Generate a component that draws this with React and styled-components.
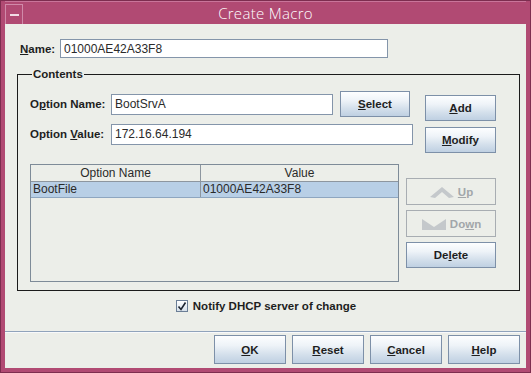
import React, { useState } from 'react'
import styled, { createGlobalStyle, css } from 'styled-components'

const GlobalStyle = createGlobalStyle`
  html, body {
    margin: 0;
    padding: 0;
    background: #ffffff;
  }
  body {
    font-family: "Liberation Sans", Arial, sans-serif;
  }
  * {
    box-sizing: border-box;
  }
`;

const Frame = styled.div`
  width: 531px;
  height: 373px;
  display: flex;
  flex-direction: column;
  background: #b14a73;
  border: 1px solid #7d2d4f;
  padding: 0 4px 4px 4px;
`;

const TitleBar = styled.div`
  height: 23px;
  display: flex;
  align-items: center;
  border-top: 1px solid #c9759a;
`;

const MenuButton = styled.div`
  width: 18px;
  height: 20px;
  margin-top: 2px;
  border-left: 1px solid #d08aa9;
  border-right: 1px solid #d08aa9;
  border-top: 1px solid #d08aa9;
  display: flex;
  align-items: center;
  justify-content: center;

  span {
    width: 9px;
    height: 2px;
    background: #f1dbe5;
  }
`;

const Title = styled.div`
  flex: 1;
  text-align: center;
  color: #ffffff;
  font-family: "Open Sans", "DejaVu Sans", sans-serif;
  font-weight: 300;
  font-size: 15px;
  letter-spacing: 0.3px;
  padding-right: 18px;
`;

const Panel = styled.div`
  flex: 1;
  background: #eceee9;
  display: flex;
  flex-direction: column;
`;

const Body = styled.div`
  padding: 15px 7px 0 12px;
  display: flex;
  flex-direction: column;
`;

const labelFont = css`
  font-family: "Liberation Sans", Arial, sans-serif;
  font-weight: bold;
  font-size: 11.5px;
  color: #1e1e1e;
`;

const Label = styled.label`
  ${labelFont};
  width: ${p => p.$w}px;
  flex-shrink: 0;
  padding-left: ${p => p.$pad || 0}px;

  u {
    text-decoration: underline;
    text-underline-offset: 1px;
  }
`;

const Row = styled.div`
  display: flex;
  align-items: center;
  height: ${p => p.$h || 26}px;
`;

const TextField = styled.input`
  width: ${p => p.$w}px;
  height: ${p => p.$h || 21}px;
  border: 1px solid #8495aa;
  background: #ffffff;
  padding: 0 3px;
  font-family: "Liberation Sans", Arial, sans-serif;
  font-size: 12px;
  color: #2a2a2a;
  outline: none;
`;

const Button = styled.button`
  ${labelFont};
  width: ${p => p.$w}px;
  height: ${p => p.$h || 26}px;
  flex-shrink: 0;
  border: 1px solid ${p => (p.disabled ? '#a8adb2' : '#7d90a8')};
  background: ${p =>
    p.disabled
      ? '#eceee9'
      : 'linear-gradient(#fdfeff 0%, #eef3f8 35%, #d3dfeb 70%, #bfd0e2 100%)'};
  color: ${p => (p.disabled ? '#a2a6aa' : '#1e1e1e')};
  padding: 0;
  display: flex;
  align-items: center;
  justify-content: center;
  gap: 3px;
  cursor: default;

  u {
    text-decoration: underline;
    text-underline-offset: 1px;
  }
`;

const Group = styled.fieldset`
  margin: 9px 0 0 0;
  width: 503px;
  border: 1px solid #1b1b1b;
  padding: 10px 22px 8px 12px;
  display: flex;
  flex-direction: column;
`;

const Legend = styled.legend`
  ${labelFont};
  padding: 0 1px;
  margin-left: 2px;
  line-height: 14px;
`;

const TopSection = styled.div`
  display: flex;
  gap: 12px;
`;

const FieldColumn = styled.div`
  display: flex;
  flex-direction: column;
  gap: 4px;
  width: 383px;
`;

const ButtonColumn = styled.div`
  display: flex;
  flex-direction: column;
  gap: ${p => p.$gap}px;
  margin-top: ${p => p.$top}px;
`;

const BottomSection = styled.div`
  display: flex;
  gap: 7px;
  margin-top: 11px;
`;

const Table = styled.div`
  width: 369px;
  height: 118px;
  border: 1px solid #7e8b98;
  background: #eceee9;
  display: flex;
  flex-direction: column;
`;

const TableRow = styled.div`
  display: grid;
  grid-template-columns: 170px 1fr;
  height: ${p => (p.$header ? 17 : 16)}px;
  background: ${p => (p.$selected ? '#b8cfe6' : 'transparent')};
  border-bottom: 1px solid ${p => (p.$selected ? '#8ea6c0' : '#8d969f')};
`;

const Cell = styled.div`
  font-family: "Liberation Sans", Arial, sans-serif;
  font-size: 12px;
  color: #2a2a2a;
  line-height: ${p => (p.$header ? 16 : 15)}px;
  text-align: ${p => (p.$header ? 'center' : 'left')};
  padding-left: ${p => (p.$header ? 0 : 2)}px;
  border-right: ${p => (p.$last ? 'none' : '1px solid #8d969f')};
  white-space: nowrap;
  overflow: hidden;
`;

const CheckRow = styled.div`
  height: 30px;
  display: flex;
  align-items: center;
  justify-content: center;
  gap: 5px;
  padding-right: 4px;
`;

const CheckBox = styled.div`
  width: 12px;
  height: 12px;
  border: 1px solid #6b7e96;
  background: linear-gradient(#ffffff, #d6e0ea);
  display: flex;
  align-items: center;
  justify-content: center;
`;

const CheckLabel = styled.span`
  ${labelFont};
`;

const Separator = styled.div`
  margin-top: 10px;
  height: 2px;
  border-top: 1px solid #90a3bb;
  border-bottom: 1px solid #f8f9fb;
`;

const ButtonBar = styled.div`
  display: flex;
  justify-content: flex-end;
  gap: 6px;
  padding: 2px 6px 0 0;
`;

function ArrowIcon({ down }) {
  return (
    <svg width="26" height="16" viewBox="0 0 26 16">
      {down ? (
        <path d="M1 3 L13 11 L25 3 L25 14 L1 14 Z" fill="#c4c8cb" />
      ) : (
        <path d="M1 13 L13 3 L25 13 L20 14 L13 8 L6 14 Z" fill="#c4c8cb" />
      )}
    </svg>
  );
}

const rows = [{ name: 'BootFile', value: '01000AE42A33F8' }];

export default function App() {
  const [macroName, setMacroName] = useState('01000AE42A33F8');
  const [optName, setOptName] = useState('BootSrvA');
  const [optValue, setOptValue] = useState('172.16.64.194');
  const [notify, setNotify] = useState(true);

  return (
    <>
      <GlobalStyle />
      <Frame>
        <TitleBar>
          <MenuButton>
            <span />
          </MenuButton>
          <Title>Create Macro</Title>
        </TitleBar>
        <Panel>
          <Body>
            <Row $h={19}>
              <Label $w={43} $pad={3}>
                <u>N</u>ame:
              </Label>
              <TextField $w={328} $h={19} value={macroName} onChange={e => setMacroName(e.target.value)} />
            </Row>

            <Group>
              <Legend>Contents</Legend>
              <TopSection>
                <FieldColumn>
                  <Row>
                    <Label $w={81}>
                      O<u>p</u>tion Name:
                    </Label>
                    <TextField $w={222} value={optName} onChange={e => setOptName(e.target.value)} />
                    <Button $w={70} style={{ marginLeft: 7 }}>
                      <span>
                        <u>S</u>elect
                      </span>
                    </Button>
                  </Row>
                  <Row>
                    <Label $w={81}>
                      Option <u>V</u>alue:
                    </Label>
                    <TextField $w={302} value={optValue} onChange={e => setOptValue(e.target.value)} />
                  </Row>
                </FieldColumn>
                <ButtonColumn $gap={6} $top={4}>
                  <Button $w={71}>
                    <span>
                      <u>A</u>dd
                    </span>
                  </Button>
                  <Button $w={71}>
                    <span>
                      <u>M</u>odify
                    </span>
                  </Button>
                </ButtonColumn>
              </TopSection>

              <BottomSection>
                <Table>
                  <TableRow $header>
                    <Cell $header>Option Name</Cell>
                    <Cell $header $last>
                      Value
                    </Cell>
                  </TableRow>
                  {rows.map(r => (
                    <TableRow key={r.name} $selected>
                      <Cell>{r.name}</Cell>
                      <Cell $last>{r.value}</Cell>
                    </TableRow>
                  ))}
                </Table>
                <ButtonColumn $gap={5} $top={14}>
                  <Button $w={90} $h={27} disabled>
                    <ArrowIcon />
                    <span>
                      <u>U</u>p
                    </span>
                  </Button>
                  <Button $w={90} $h={27} disabled>
                    <ArrowIcon down />
                    <span>
                      Do<u>w</u>n
                    </span>
                  </Button>
                  <Button $w={90} $h={26}>
                    <span>
                      De<u>l</u>ete
                    </span>
                  </Button>
                </ButtonColumn>
              </BottomSection>
            </Group>

            <CheckRow onClick={() => setNotify(!notify)}>
              <CheckBox>
                {notify && (
                  <svg width="10" height="10" viewBox="0 0 10 10">
                    <path d="M1.5 5.5 L4 8.5 L8.5 1.5" stroke="#1c2430" strokeWidth="1.6" fill="none" />
                  </svg>
                )}
              </CheckBox>
              <CheckLabel>Notify DHCP server of change</CheckLabel>
            </CheckRow>
          </Body>

          <Separator />
          <ButtonBar>
            <Button $w={72} $h={29}>
              <span>
                <u>O</u>K
              </span>
            </Button>
            <Button $w={72} $h={29}>
              <span>
                <u>R</u>eset
              </span>
            </Button>
            <Button $w={72} $h={29}>
              <span>
                <u>C</u>ancel
              </span>
            </Button>
            <Button $w={72} $h={29}>
              <span>
                <u>H</u>elp
              </span>
            </Button>
          </ButtonBar>
        </Panel>
      </Frame>
    </>
  );
}
